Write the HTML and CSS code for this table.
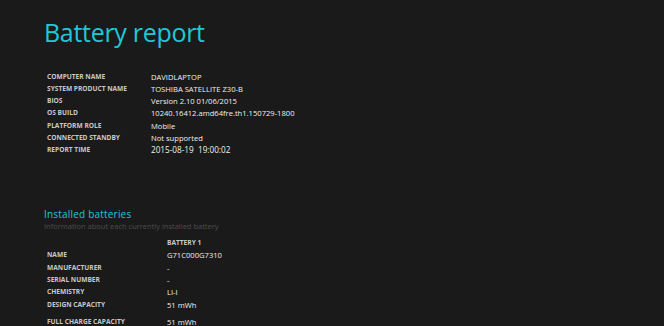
FILE: index.html
```html
<!DOCTYPE html>
<html lang="en">
<head>
  <meta charset="UTF-8" />
  <title>Battery report</title>
  <link rel="stylesheet" href="styles.css">
</head>
<body>
  <h1>Battery report</h1>

  <table class="info">
    <tr><td class="label">Computer name</td><td>DAVIDLAPTOP</td></tr>
    <tr><td class="label">System product name</td><td>TOSHIBA SATELLITE Z30-B</td></tr>
    <tr><td class="label">BIOS</td><td>Version 2.10 01/06/2015</td></tr>
    <tr><td class="label">OS build</td><td>10240.16412.amd64fre.th1.150729-1800</td></tr>
    <tr><td class="label">Platform role</td><td>Mobile</td></tr>
    <tr><td class="label">Connected standby</td><td>Not supported</td></tr>
    <tr><td class="label">Report time</td><td class="date-time">2015-08-19&nbsp; 19:00:02</td></tr>
  </table>

  <h2>Installed batteries</h2>
  <div class="explanation">Information about each currently installed battery</div>

  <table class="batteries">
    <thead>
      <tr><td></td><td class="label">Battery 1</td></tr>
    </thead>
    <tbody>
      <tr><td class="label">Name</td><td>G71C000G7310</td></tr>
      <tr><td class="label">Manufacturer</td><td>-</td></tr>
      <tr><td class="label">Serial number</td><td>-</td></tr>
      <tr><td class="label">Chemistry</td><td>LI-I</td></tr>
      <tr><td class="label">Design capacity</td><td>51 mWh</td></tr>
      <tr class="spaced"><td class="label">Full charge capacity</td><td>51 mWh</td></tr>
    </tbody>
  </table>
</body>
</html>
```

FILE: styles.css
```css
body {
  margin: 0;
  padding: 0 0 0 44px;
  background-color: #1a1a1a;
  color: #f0f0f0;
  font-family: "Open Sans", "Noto Sans", sans-serif;
  font-size: 7.6px;
}

h1 {
  font-size: 25px;
  font-weight: 400;
  letter-spacing: -0.3px;
  line-height: 36px;
  color: #1ec8d8;
  margin: 14px 0 0 0;
}

h2 {
  font-size: 10px;
  font-weight: 400;
  letter-spacing: 0.02em;
  line-height: 14px;
  color: #1ec8d8;
  margin: 0;
}

.explanation {
  color: #4e4e4e;
  font-size: 7.5px;
  line-height: 10px;
  margin-bottom: 6px;
}

table {
  border-collapse: collapse;
}

td {
  padding: 0 0 0 3px;
  line-height: 12.3px;
  white-space: nowrap;
  vertical-align: middle;
}

.label {
  font-size: 6.6px;
  font-weight: 700;
  text-transform: uppercase;
  color: #c8c8c8;
}

.info {
  margin: 20.5px 0 50.5px 0;
}

.info td.label {
  width: 101px;
}

.date-time {
  font-size: 8.2px;
}

.batteries td.label:first-child {
  width: 117px;
}

.batteries tr.spaced td {
  padding-top: 5px;
}
```
